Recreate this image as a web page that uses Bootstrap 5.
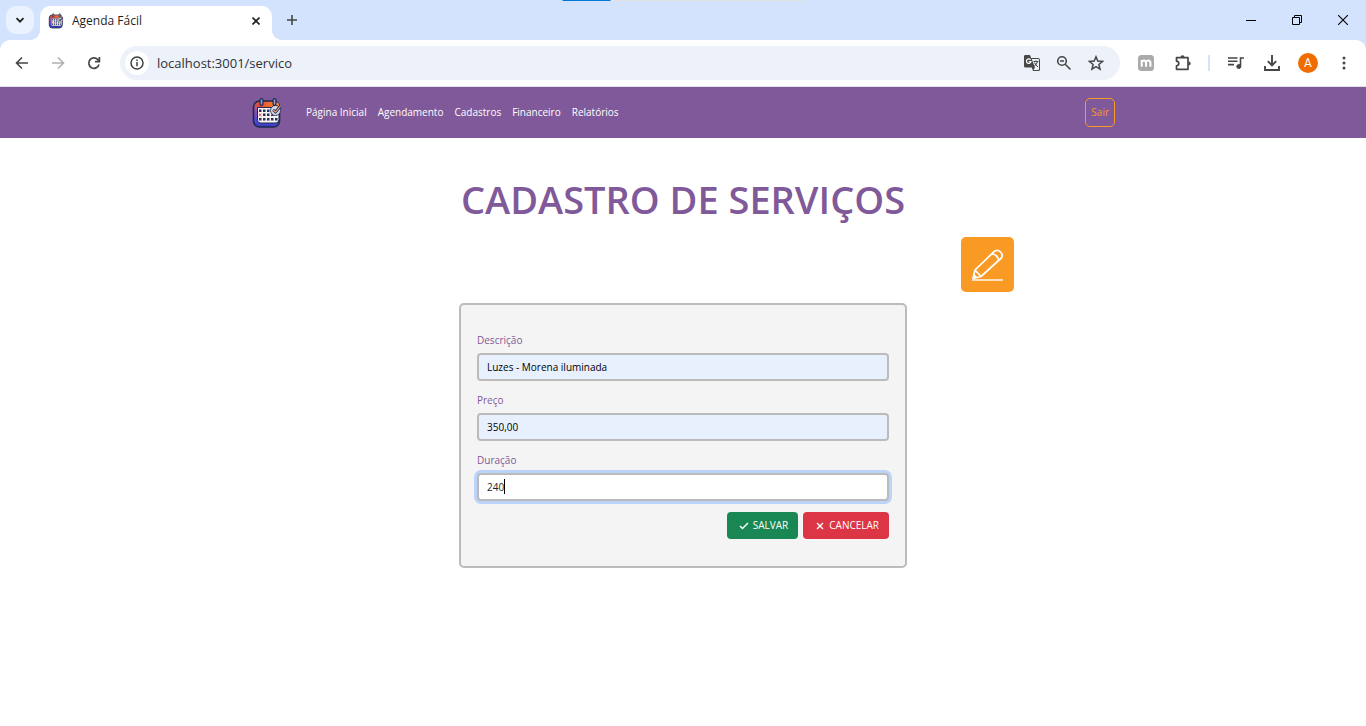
<!DOCTYPE html>
<html lang="pt-BR">
<head>
<meta charset="utf-8">
<meta name="viewport" content="width=device-width, initial-scale=1">
<title>Agenda Fácil</title>
<link href="https://cdn.jsdelivr.net/npm/bootstrap@5.3.0/dist/css/bootstrap.min.css" rel="stylesheet">
<style>
  :root { --roxo: #7f5999; --laranja: #f89a24; --borda: #bbb; }
  body { font-family: "Open Sans", "Noto Sans", sans-serif; font-size: 10px; line-height: 16px; }
  svg { display: block; flex: none; }

  /* browser frame */
  .plain-btn { border: 0; padding: 0; background: transparent; color: #444746; display: flex; align-items: center; justify-content: center; }
  .tabstrip { background: #d3e3fd; height: 40px; }
  .tab-search { width: 28px; height: 28px; border-radius: 10px; background: #ebf2ff; margin: 6px 6px 0 6px; }
  .tab-open { width: 232px; height: 34px; margin-top: 6px; padding: 0 8px 4px; background: #fff; border-radius: 10px 10px 0 0; font-size: 12px; color: #1f1f1f; }
  .tab-open::before, .tab-open::after { content: ""; position: absolute; bottom: 0; width: 10px; height: 10px; }
  .tab-open::before { right: 100%; background: radial-gradient(circle at 0 0, transparent 10px, #fff 10px); }
  .tab-open::after { left: 100%; background: radial-gradient(circle at 100% 0, transparent 10px, #fff 10px); }
  .new-tab { width: 40px; height: 40px; }
  .win-btn { width: 46px; height: 40px; color: #000; }
  .loader { width: 241px; height: 1px; background: #e3e3e3; }
  .loader-fill { width: 20%; height: 1px; background: #0078d7; }
  .toolbar-wrap { background: #d3e3fd; }
  .toolbar { height: 47px; padding: 0 4px; background: #fff; border-radius: 10px 10px 0 0; border-bottom: 1px solid #dfe3e1; }
  .tool-btn { width: 36px; height: 34px; }
  .omni { height: 34px; border-radius: 17px; background: #ecf1fa; padding: 0 8px 0 5px; margin: 0 8px; }
  .omni .plain-btn { width: 32px; height: 32px; }
  .omni .site-info { width: 24px; height: 24px; border-radius: 12px; background: #fff; }
  .omni input { border: 0; outline: 0; background: transparent; font-size: 13px; color: #303236; padding: 0 8px; min-width: 0; }
  .tool-sep { width: 2px; height: 16px; margin: 0 8px; background: #d3e3fd; }
  .avatar { width: 20px; height: 20px; border-radius: 10px; background: #ef6c00; color: #fff; font: 12px/20px Roboto, sans-serif; }

  /* application */
  .app-nav { background: var(--roxo); height: 51px; padding: 0; }
  .app-width { max-width: 864px; }
  .app-nav .navbar-brand { margin-right: 18px; }
  .app-nav .navbar-nav { gap: 1px; }
  .app-nav .navbar-nav .nav-link { color: #fff; padding: 0 5px 2px; }
  .btn-sair, .btn-sair:hover { border: 1px solid var(--laranja); color: var(--laranja); border-radius: 5px; font-size: 10px; line-height: 15px; padding: 6px 5px; }
  .titulo { color: var(--roxo); font-size: 38px; line-height: 48px; font-weight: 600; margin: 37px 0 14px; }
  .acoes { max-width: 662px; }
  .btn-editar { width: 53px; height: 55px; border-radius: 5px; background: var(--laranja); border: 0; }
  .ficha { max-width: 448px; margin-top: 11px; padding: 27px 16px; background: #f4f4f4; border: 2px solid var(--borda); border-radius: 5px; }
  .ficha .form-label { color: var(--roxo); margin-bottom: 5px; display: block; }
  .ficha .form-control { height: 28px; padding: 4px 8px; border: 2px solid var(--borda); border-radius: 4px; font-size: 10px; line-height: 16px; color: #212529; }
  .ficha .preenchido { background: #e8f0fe; color: #000; }
  .ficha .ativo { box-shadow: 0 0 0 3px #bdd4fa; }
  .campo { margin-bottom: 11px; }
  .cursor { left: 27px; top: 6px; width: 1px; height: 15px; background: #000; }
  .botoes { gap: 5px; }
  .ficha .btn { font-size: 10px; line-height: 16px; height: 27px; padding: 0 10px 1px 12px; border: 0; border-radius: 4px; gap: 4px; }
</style>
</head>
<body>
<svg width="0" height="0" class="position-absolute" aria-hidden="true">
  <symbol id="agenda" viewBox="0 0 32 32">
    <linearGradient id="gCorpo" x1="0" y1="0" x2="0" y2="1"><stop offset="0" stop-color="#f0562c"/><stop offset=".4" stop-color="#8d4fb0"/><stop offset=".8" stop-color="#4a45e0"/><stop offset="1" stop-color="#3a3fb8"/></linearGradient>
    <linearGradient id="gTopo"><stop offset="0" stop-color="#e8402f"/><stop offset="1" stop-color="#fa8f2a"/></linearGradient>
    <rect x="2.500" y="4" width="26" height="26" rx="6" fill="url(#gCorpo)" stroke="#1d2a4d" stroke-width="1.600"/>
    <path d="M6.500 11V8q0-3 3-3H24q4 0 4 3v3z" fill="url(#gTopo)"/>
    <path d="M6.500 10.500H28v12q0 3.500-3.500 3.500h-15q-3 0-3-3z" fill="#f7f3f3" stroke="#1d2a4d"/>
    <path d="M12 12.500h2.500V15H12zm4 0h2.500V15H16zM12 16.500h2.500V19H12zm4 0h2.500V19H16zm4 1h2.500V19H20zM8 21h2.500v2.500H8zm4 0h2.500v2.500H12zm4 0h2.500v2.500H16zm4 0h2.500v2.500H20zm4 0h2.500v2.500H24zM8 12.500h2.500V15H8z" fill="#26305a"/>
    <path d="M7.800 16.500l2.700 2.700m0-2.700l-2.700 2.700" stroke="#ee4b3b"/>
    <circle cx="24.500" cy="13.500" r="5" fill="#ddd8e2" stroke="#34406b"/>
    <path d="M22 12.800l2.500 2.200 5-6" fill="none" stroke="#26305a" stroke-width="2.800"/>
    <path d="M22 12.800l2.500 2.200 5-6" fill="none" stroke="#f3b08a" stroke-width="1.100"/>
    <path d="M10.500 3v4M23.500 3v4" stroke="#1d2a4d" stroke-width="4" stroke-linecap="round"/>
    <path d="M10.500 3v4M23.500 3v4" stroke="#8ea0d8" stroke-width="1.600" stroke-linecap="round"/>
  </symbol>
</svg>

<header>
  <div class="tabstrip d-flex position-relative">
    <button class="plain-btn tab-search" aria-label="Pesquisar guias"><svg width="10" height="10" viewBox="0 0 10 10" fill="none" stroke="#1f1f1f" stroke-width="1.800"><path d="M1.500 3.200L5 6.700l3.500-3.500"/></svg></button>
    <div class="tab-open d-flex align-items-center position-relative">
      <svg width="16" height="16"><use href="#agenda"/></svg>
      <span class="ms-2 flex-grow-1 text-nowrap">Agenda Fácil</span>
      <button class="plain-btn p-1" aria-label="Fechar guia"><svg width="8" height="8" viewBox="0 0 8 8" stroke="#1f1f1f" stroke-width="1.600"><path d="M.5.500l7 7m0-7l-7 7"/></svg></button>
    </div>
    <button class="plain-btn new-tab" aria-label="Nova guia"><svg width="12" height="12" viewBox="0 0 12 12" stroke="#444746" stroke-width="1.600"><path d="M6 1v10M1 6h10"/></svg></button>
    <div class="d-flex ms-auto">
      <button class="plain-btn win-btn" aria-label="Minimizar"><svg width="10" height="10" viewBox="0 0 10 10" stroke="#000"><path d="M0 5.500h10"/></svg></button>
      <button class="plain-btn win-btn" aria-label="Restaurar"><svg width="10" height="10" viewBox="0 0 10 10" stroke="#000" fill="none"><path d="M.5 2.500h7v7h-7zM2.500 2.500v-2h7v7h-2"/></svg></button>
      <button class="plain-btn win-btn" aria-label="Fechar"><svg width="10" height="10" viewBox="0 0 10 10" stroke="#000" stroke-width="1.100"><path d="M0 0l10 10m0-10L0 10"/></svg></button>
    </div>
    <div class="loader position-absolute top-0 start-50 translate-middle-x"><div class="loader-fill"></div></div>
  </div>
  <div class="toolbar-wrap">
    <div class="toolbar d-flex align-items-center">
      <button class="plain-btn tool-btn" aria-label="Voltar"><svg width="14" height="14" viewBox="0 0 14 14" fill="none" stroke="#444746" stroke-width="1.600"><path d="M13 7H2M7 1.500L1.500 7 7 12.500"/></svg></button>
      <button class="plain-btn tool-btn" aria-label="Avançar"><svg width="14" height="14" viewBox="0 0 14 14" fill="none" stroke="#b0b1b1" stroke-width="1.600"><path d="M1 7h11M7 1.500L12.500 7 7 12.500"/></svg></button>
      <button class="plain-btn tool-btn" aria-label="Recarregar"><svg width="14" height="14" viewBox="0 0 14 14" fill="none" stroke="#444746" stroke-width="1.700"><path d="M12 8.500A5.200 5.200 0 1 1 11.200 4L12 5M12.400 1v4.600H8"/></svg></button>
      <div class="omni d-flex align-items-center flex-grow-1">
        <button class="plain-btn site-info" aria-label="Informações do site"><svg width="14" height="14" viewBox="0 0 14 14" fill="none" stroke="#3c4043" stroke-width="1.500"><circle cx="7" cy="7" r="6"/><path d="M7 6v4.300M7 3.500v1.500"/></svg></button>
        <input class="flex-grow-1" type="text" aria-label="Endereço" value="localhost:3001/servico">
        <button class="plain-btn" aria-label="Traduzir"><svg width="18" height="18" viewBox="0 0 18 18"><path d="M2 1h5l1.200 3H15a2 2 0 0 1 2 2v9.500a1.500 1.500 0 0 1-1.500 1.500H10l-1.200-3.500H2.500A1.500 1.500 0 0 1 1 12V2.500A1.500 1.500 0 0 1 2 1z" fill="#474747"/><path d="M8.700 5H15a1 1 0 0 1 1 1v9a1 1 0 0 1-1 1h-4.500l1.500-2.500z" fill="#ecf1fa"/><path d="M10.500 7.500h5M13 6.500v1M14.500 7.500q-.8 3-3 4.500M11.500 8.500q1 2.500 3.500 4.500" stroke="#474747" fill="none"/><path d="M7.600 5.700A2.300 2.300 0 1 0 8 7.700H5.800" stroke="#fff" stroke-width="1.200" fill="none"/></svg></button>
        <button class="plain-btn" aria-label="Zoom"><svg width="16" height="16" viewBox="0 0 16 16" fill="none" stroke="#474747" stroke-width="1.600"><circle cx="6" cy="6" r="4.300"/><path d="M9.200 9.200l5.300 5.300M4 6h4"/></svg></button>
        <button class="plain-btn" aria-label="Favoritos"><svg width="16" height="16" viewBox="0 0 16 16" fill="none" stroke="#474747" stroke-width="1.500"><path d="M8 1.800l1.800 4.300 4.700.4-3.600 3 1.100 4.600L8 11.700l-4 2.400 1.100-4.600-3.600-3 4.700-.4z"/></svg></button>
      </div>
      <button class="plain-btn tool-btn" aria-label="Extensão"><svg width="16" height="16" viewBox="0 0 16 16"><rect width="16" height="16" rx="3.500" fill="#aaa"/><path d="M3.700 11.800V5M3.700 7.300Q4 5.500 5.800 5.500T8 7.500v4.300M8 7.500q.3-2 2.200-2t2.200 2v4.300" fill="none" stroke="#fff" stroke-width="2"/></svg></button>
      <button class="plain-btn tool-btn" aria-label="Extensões"><svg width="18" height="18" viewBox="0 0 18 18"><path d="M3.500 3.700h11.500v11.600H3.500v-3.500q2.300-.3 2.300-2.300T3.500 7.200z" fill="none" stroke="#444746" stroke-width="1.700" stroke-linejoin="round"/><path d="M7.500 3.300a2 2 0 0 1 4 0zM15.700 7.500a2 2 0 0 1 0 4z" fill="#444746"/></svg></button>
      <div class="tool-sep"></div>
      <button class="plain-btn tool-btn" aria-label="Controle de mídia"><svg width="16" height="14" viewBox="0 0 16 14" fill="none" stroke="#444746" stroke-width="1.600"><path d="M0 2h9.500M0 5.300h9.500M0 8.600h6M12.500 10V2H16"/><circle cx="10.800" cy="10.500" r="2" fill="#444746" stroke-width="1"/></svg></button>
      <button class="plain-btn tool-btn" aria-label="Downloads"><svg width="16" height="16" viewBox="0 0 16 16" fill="none" stroke="#444746" stroke-width="1.900"><path d="M8 0v10M3.800 6.200L8 10.400l4.200-4.200M1 11v4h14v-4"/></svg></button>
      <button class="plain-btn tool-btn" aria-label="Perfil"><span class="avatar">A</span></button>
      <button class="plain-btn tool-btn" aria-label="Menu"><svg width="4" height="14" viewBox="0 0 4 14" fill="#444746"><circle cx="2" cy="2" r="1.500"/><circle cx="2" cy="7" r="1.500"/><circle cx="2" cy="12" r="1.500"/></svg></button>
    </div>
  </div>
</header>

<nav class="navbar navbar-expand app-nav">
  <div class="container-fluid app-width px-0">
    <a class="navbar-brand p-0" href="#" aria-label="Agenda Fácil"><svg width="32" height="32"><use href="#agenda"/></svg></a>
    <ul class="navbar-nav me-auto">
      <li class="nav-item"><a class="nav-link" href="#">Página Inicial</a></li>
      <li class="nav-item"><a class="nav-link" href="#">Agendamento</a></li>
      <li class="nav-item"><a class="nav-link" href="#">Cadastros</a></li>
      <li class="nav-item"><a class="nav-link" href="#">Financeiro</a></li>
      <li class="nav-item"><a class="nav-link" href="#">Relatórios</a></li>
    </ul>
    <button class="btn btn-sair">Sair</button>
  </div>
</nav>

<main>
  <h1 class="titulo text-center">CADASTRO DE SERVIÇOS</h1>
  <div class="acoes mx-auto d-flex justify-content-end">
    <button class="btn btn-editar p-0 d-flex align-items-center justify-content-center" aria-label="Editar"><svg width="34" height="34" viewBox="0 0 34 34" fill="none" stroke="#fff" stroke-width="1.700" stroke-linejoin="round"><path d="M1 32h31" stroke-width="1.400"/><path d="M2 30.500l2-8.500L23.500 3.200q3-2.200 6 .8t.8 6L10 28.500zM4 22l6 6.500M21 5.800q5.500.5 6.600 6.600M2 30.500l3-1.500-1.500-1.500z"/></svg></button>
  </div>
  <form class="ficha mx-auto">
    <div class="campo">
      <label class="form-label" for="descricao">Descrição</label>
      <input class="form-control preenchido" id="descricao" type="text" value="Luzes - Morena iluminada">
    </div>
    <div class="campo">
      <label class="form-label" for="preco">Preço</label>
      <input class="form-control preenchido" id="preco" type="text" value="350,00">
    </div>
    <div class="campo">
      <label class="form-label" for="duracao">Duração</label>
      <div class="position-relative">
        <input class="form-control ativo" id="duracao" type="text" value="240">
        <span class="cursor position-absolute"></span>
      </div>
    </div>
    <div class="botoes d-flex justify-content-end">
      <button type="button" class="btn btn-success d-flex align-items-center"><svg width="10" height="10" viewBox="0 0 10 10" fill="none" stroke="#fff" stroke-width="1.400"><path d="M1 6l2.500 2.500L9 3"/></svg>SALVAR</button>
      <button type="button" class="btn btn-danger d-flex align-items-center"><svg width="10" height="10" viewBox="0 0 10 10" fill="none" stroke="#fff" stroke-width="1.400"><path d="M2 3l6 6m0-6l-6 6"/></svg>CANCELAR</button>
    </div>
  </form>
</main>
<script src="https://cdn.jsdelivr.net/npm/bootstrap@5.3.0/dist/js/bootstrap.bundle.min.js"></script>
</body>
</html>
